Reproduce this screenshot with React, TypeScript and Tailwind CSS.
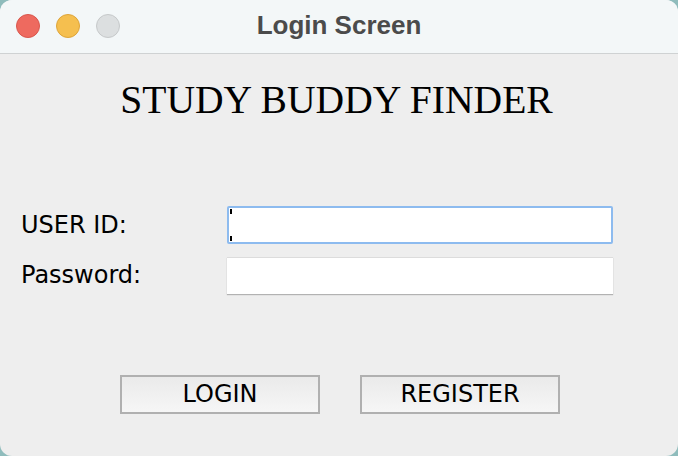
import React from 'react';

const sans = { fontFamily: '"DejaVu Sans", "Liberation Sans", sans-serif' };

export default function App() {
  return (
    <div className="w-[678px] h-[456px] bg-[#8fbcbc] overflow-hidden">
      <div className="w-full h-full rounded-[12px] overflow-hidden bg-[#eeeeee] flex flex-col">
        {/* Title bar */}
        <div className="relative h-[54px] shrink-0 bg-[#f3f7f8] border-b border-[#cfd2d3] flex items-center justify-center">
          <div className="absolute left-[16px] top-[14px] flex gap-[16px]">
            <span className="w-[24px] h-[24px] rounded-full bg-[#ee6a5f] border border-[#d9574d]" />
            <span className="w-[24px] h-[24px] rounded-full bg-[#f5bf4f] border border-[#dea53a]" />
            <span className="w-[24px] h-[24px] rounded-full bg-[#dcdfe0] border border-[#c6c9ca]" />
          </div>
          <span className="text-[26px] font-bold text-[#4b4b4b] font-['Liberation_Sans',sans-serif] mb-[2px]">Login Screen</span>
        </div>

        {/* Body */}
        <div className="flex flex-col">
          <h1 className="mt-[27px] pr-[5px] text-center text-[39.6px] leading-none text-black font-['Liberation_Serif',serif]">
            STUDY BUDDY FINDER
          </h1>

          <div className="mt-[85px] flex flex-col gap-[13px]" style={sans}>
            <div className="flex items-center h-[38px]">
              <span className="w-[227px] pl-[21px] text-[24px] text-black">USER ID:</span>
              <div className="relative w-[386px] h-[38px] bg-white border-2 border-[#8dbbef] rounded-[2px]">
                <span className="absolute left-[1px] top-[1px] w-[2px] h-[5px] bg-black" />
                <span className="absolute left-[1px] bottom-[1px] w-[2px] h-[5px] bg-black" />
              </div>
            </div>
            <div className="flex items-center h-[37px]">
              <span className="w-[227px] pl-[21px] text-[24px] text-black">Password:</span>
              <div className="w-[386px] h-[37px] bg-white border-t border-[#dcdcdc] shadow-[0_1px_1px_rgba(0,0,0,0.25)]" />
            </div>
          </div>

          <div className="mt-[81px] pl-[2px] flex justify-center gap-[40px]" style={sans}>
            <button className="w-[200px] h-[39px] border-2 border-[#b0b0b0] bg-gradient-to-b from-[#eaeaea] to-[#f6f6f6] text-[24px] text-black flex items-center justify-center">
              LOGIN
            </button>
            <button className="w-[200px] h-[39px] border-2 border-[#b0b0b0] bg-gradient-to-b from-[#eaeaea] to-[#f6f6f6] text-[24px] text-black flex items-center justify-center">
              REGISTER
            </button>
          </div>
        </div>
      </div>
    </div>
  );
}
